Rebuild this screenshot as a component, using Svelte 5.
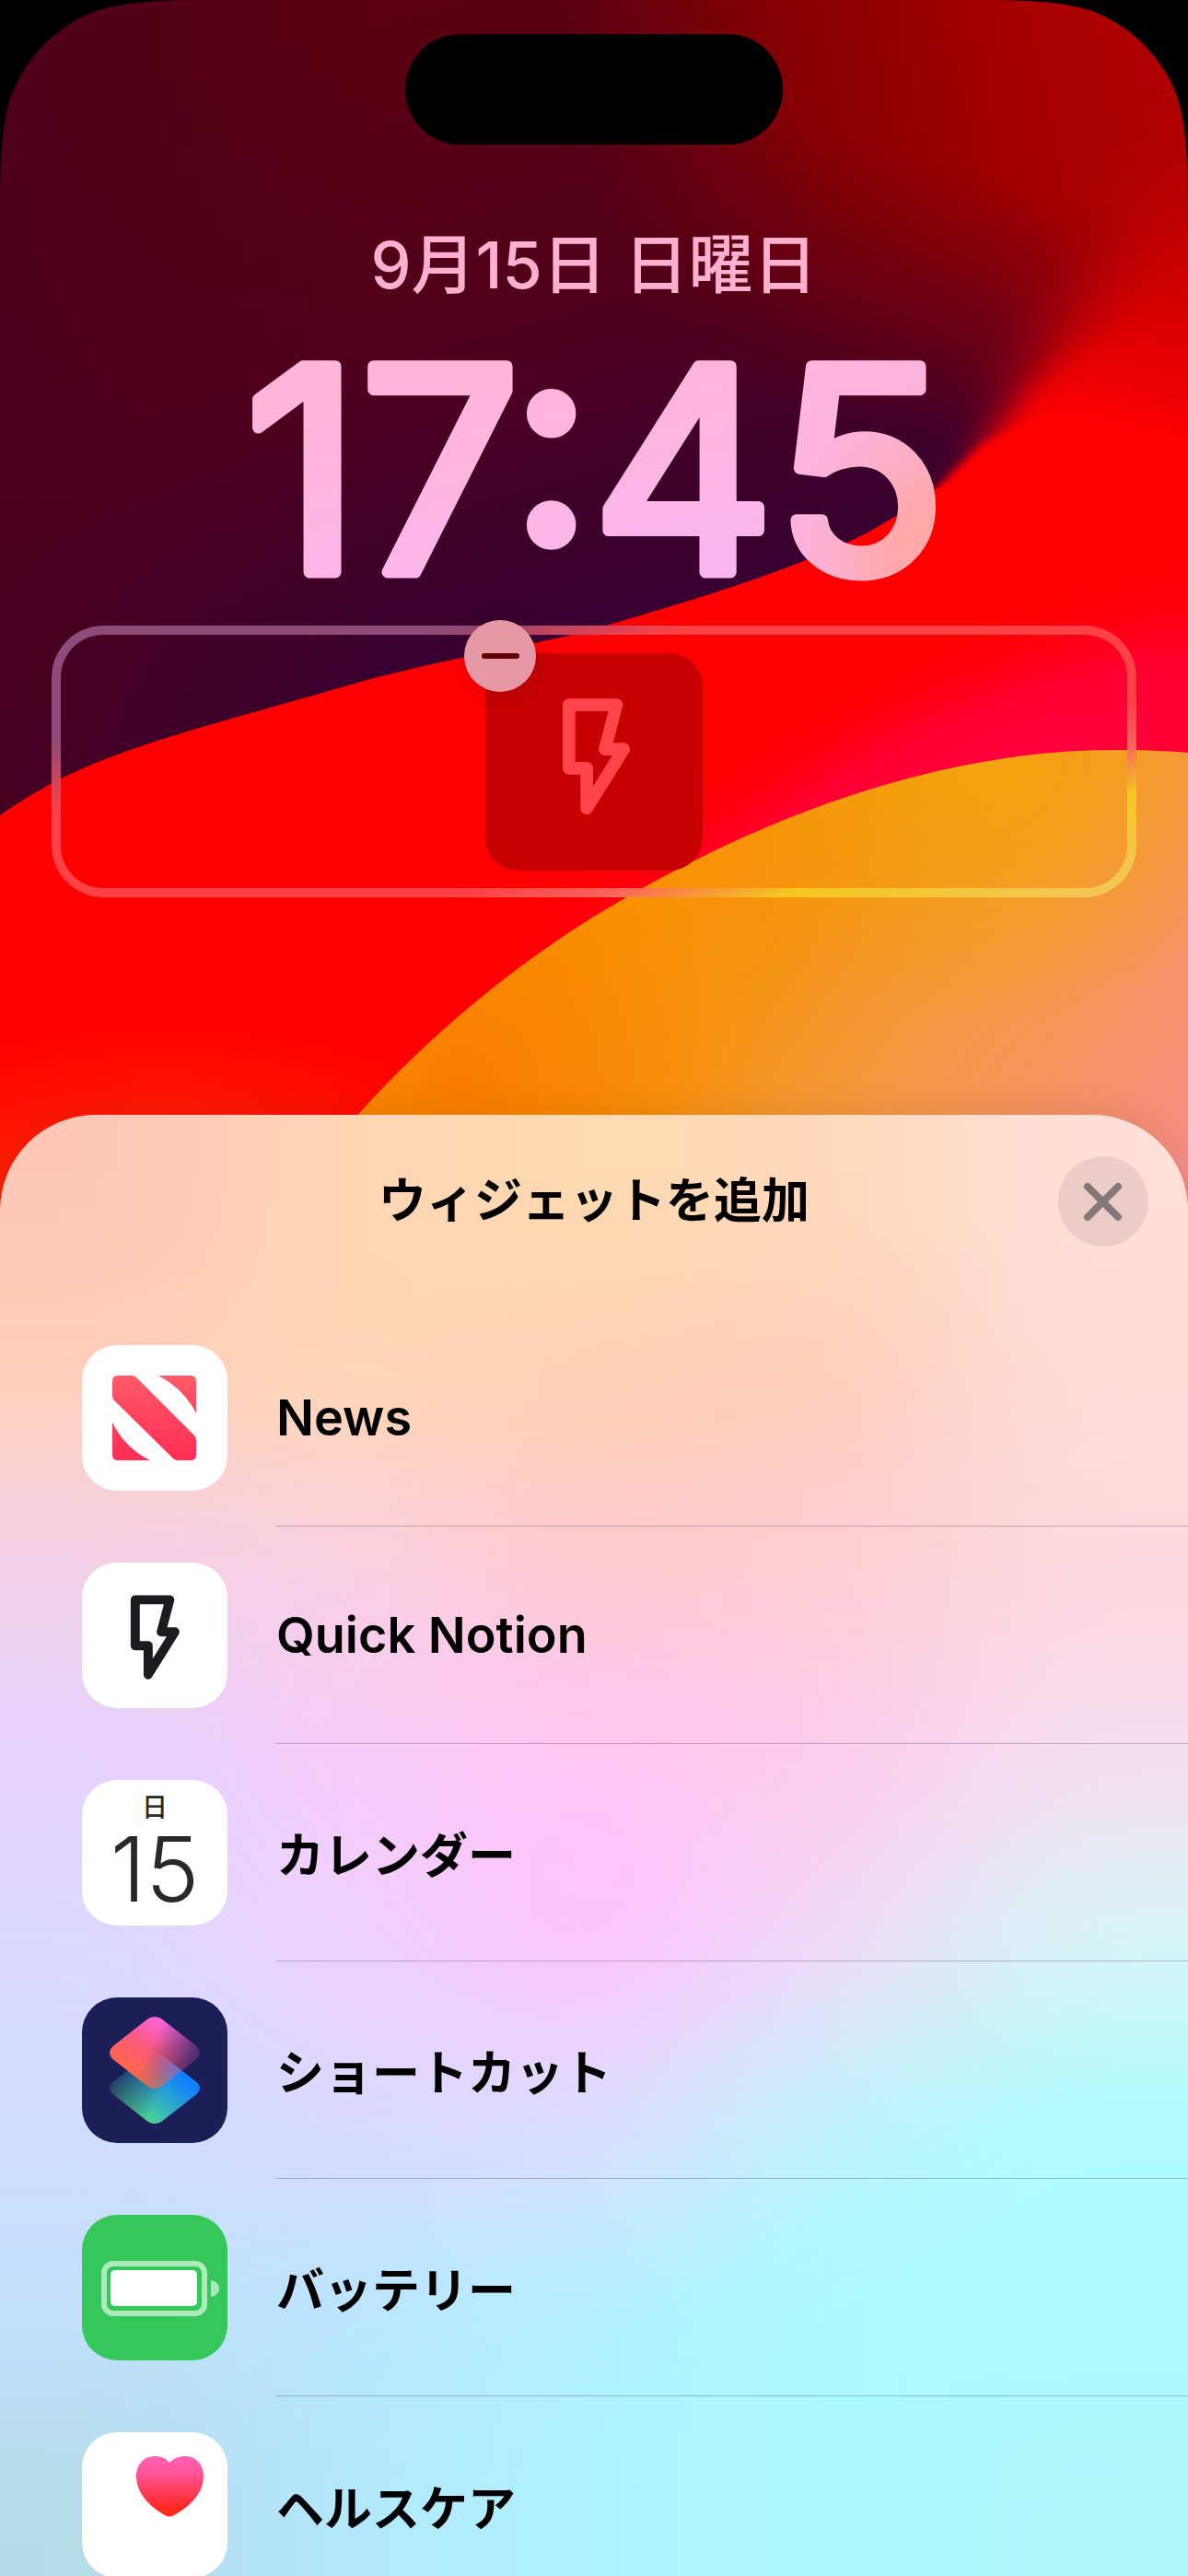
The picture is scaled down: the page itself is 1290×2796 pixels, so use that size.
<script lang="ts">
	type App = { id: string; name: string; lang?: string };

	const apps: App[] = [
		{ id: "news", name: "News", lang: "en" },
		{ id: "notion", name: "Quick Notion", lang: "en" },
		{ id: "calendar", name: "カレンダー" },
		{ id: "shortcuts", name: "ショートカット" },
		{ id: "battery", name: "バッテリー" },
		{ id: "health", name: "ヘルスケア" },
	];

	// colour cells of the sheet background, blurred into each other
	const tints = [
		["#ffc6b8", "#ffd6b4", "#ffdab0", "#ffd8ba", "#ffdfd6"],
		["#fed0ba", "#ffd6b4", "#fecfb4", "#fdccba", "#fedcd6"],
		["#f2d0e8", "#f9cfe4", "#fec9d0", "#fdced4", "#fdd8e0"],
		["#e4d2fe", "#f8caf8", "#fec6f4", "#fdcaea", "#f6deee"],
		["#dcd8fe", "#eed0fe", "#ffc0fe", "#f0d8f8", "#d8f5f6"],
		["#d0dcfe", "#dad8fe", "#dedcfd", "#bdf3fa", "#aefcff"],
		["#c4e0fe", "#b9e5fe", "#b2f0ff", "#a9faff", "#aafbff"],
		["#b4dce8", "#b3e8fe", "#aef2ff", "#aaf9ff", "#acf7f9"],
	];
	const cols = tints[0].length;
	const rows = tints.length;

	let hasWidget = $state(true);
	let open = $state(true);
</script>

{#snippet bolt()}
	<path
		d="M353 345H508L470 489H531L411 681V551H353Z"
		fill="none"
		stroke="currentColor"
		stroke-width="41"
		stroke-linejoin="round"
	/>
{/snippet}

<main class="screen">
	<svg class="wallpaper" viewBox="0 0 1290 2796" preserveAspectRatio="xMidYMin slice" aria-hidden="true">
		<defs>
			<linearGradient id="dusk" gradientUnits="userSpaceOnUse" x1="420" y1="0" x2="620" y2="700">
				<stop offset="0" stop-color="#5c0012" />
				<stop offset="0.5" stop-color="#52001c" />
				<stop offset="0.85" stop-color="#3c002c" />
				<stop offset="1" stop-color="#380032" />
			</linearGradient>
			<linearGradient id="duskLeft" gradientUnits="userSpaceOnUse" x1="0" y1="0" x2="420" y2="0">
				<stop offset="0" stop-color="#4a001c" stop-opacity="0.8" />
				<stop offset="1" stop-color="#4a001c" stop-opacity="0" />
			</linearGradient>
			<linearGradient id="ember" gradientUnits="userSpaceOnUse" x1="640" y1="180" x2="1290" y2="60">
				<stop offset="0" stop-color="#8b0000" stop-opacity="0" />
				<stop offset="0.36" stop-color="#8b0000" stop-opacity="0.9" />
				<stop offset="0.75" stop-color="#a80000" />
				<stop offset="1" stop-color="#b00000" />
			</linearGradient>
			<linearGradient id="emberFade" gradientUnits="userSpaceOnUse" x1="1020" y1="0" x2="900" y2="460">
				<stop offset="0" stop-color="#fff" />
				<stop offset="0.35" stop-color="#fff" />
				<stop offset="1" stop-color="#fff" stop-opacity="0" />
			</linearGradient>
			<mask id="emberMask" maskUnits="userSpaceOnUse" x="0" y="0" width="1290" height="900">
				<rect width="1290" height="900" fill="url(#emberFade)" />
			</mask>
			<linearGradient id="flare" gradientUnits="userSpaceOnUse" x1="1270" y1="150" x2="1200" y2="470">
				<stop offset="0" stop-color="#b40000" />
				<stop offset="0.55" stop-color="#d60000" />
				<stop offset="0.85" stop-color="#f00000" />
				<stop offset="1" stop-color="#ff0000" />
			</linearGradient>
			<radialGradient id="rose" gradientUnits="userSpaceOnUse" cx="0" cy="0" r="1" gradientTransform="translate(1020 910) rotate(-28) scale(640 210)">
				<stop offset="0" stop-color="#ff0048" />
				<stop offset="0.5" stop-color="#ff0038" stop-opacity="0.9" />
				<stop offset="1" stop-color="#ff0000" stop-opacity="0" />
			</radialGradient>
			<radialGradient id="warm" gradientUnits="userSpaceOnUse" cx="0" cy="0" r="1" gradientTransform="translate(180 1300) scale(420 200)">
				<stop offset="0" stop-color="#ff4000" />
				<stop offset="1" stop-color="#ff2000" stop-opacity="0" />
			</radialGradient>
			<linearGradient id="sun" gradientUnits="userSpaceOnUse" x1="700" y1="940" x2="1240" y2="1330">
				<stop offset="0" stop-color="#f89200" />
				<stop offset="0.25" stop-color="#f69412" />
				<stop offset="0.55" stop-color="#f59846" />
				<stop offset="1" stop-color="#f68e84" />
			</linearGradient>
			<radialGradient id="gold" gradientUnits="userSpaceOnUse" cx="1080" cy="820" r="300">
				<stop offset="0" stop-color="#f3a608" stop-opacity="0.9" />
				<stop offset="1" stop-color="#f3a000" stop-opacity="0" />
			</radialGradient>
			<radialGradient id="amber" gradientUnits="userSpaceOnUse" cx="500" cy="1180" r="330">
				<stop offset="0" stop-color="#fa7c00" />
				<stop offset="1" stop-color="#f98600" stop-opacity="0" />
			</radialGradient>
			<filter id="blurS" x="-20%" y="-20%" width="140%" height="140%">
				<feGaussianBlur stdDeviation="4" />
			</filter>
			<filter id="blurM" x="-20%" y="-20%" width="140%" height="140%">
				<feGaussianBlur stdDeviation="16" />
			</filter>
			<filter id="blurL" x="-40%" y="-40%" width="180%" height="180%">
				<feGaussianBlur stdDeviation="42" />
			</filter>
			<clipPath id="upper">
				<path d="M0 885C90 822 160 806 378 744C480 714 580 702 658 679C740 655 860 620 940 579C975 560 1000 544 1020 528L1290 700V0H0Z" />
			</clipPath>
			<path id="disc" d="M389 1210C480 1108 590 1025 675 977C810 898 1010 812 1218 814Q1256 814 1290 817V1700H100Z" />
		</defs>

		<rect width="1290" height="2796" fill="#f00" />
		<g clip-path="url(#upper)">
			<rect width="1290" height="900" fill="url(#dusk)" />
			<rect width="1290" height="900" fill="url(#duskLeft)" />
			<rect width="1290" height="900" fill="url(#ember)" mask="url(#emberMask)" />
			<g fill="url(#flare)">
				<path d="M1600 120L1290 190L1210 280L1160 350L1120 430L1100 560L1600 600Z" filter="url(#blurL)" />
				<path d="M1600 350L1290 360L1180 380L1125 420L1075 478L1030 540L1600 720Z" filter="url(#blurM)" />
				<path d="M1600 470L1200 450L1120 455L1066 483L1018 529L980 560L1000 800H1600Z" filter="url(#blurS)" />
			</g>
		</g>
		<!-- closes the seam of the clipped area -->
		<path d="M1024 526L1100 510L1290 620V760L1000 700Z" fill="#f00" />
		<rect y="480" width="1290" height="900" fill="url(#rose)" />
		<rect y="1090" width="640" height="400" fill="url(#warm)" />
		<use href="#disc" fill="url(#sun)" />
		<use href="#disc" fill="url(#gold)" />
		<use href="#disc" fill="url(#amber)" />
		<path d="M0 0H252C180 0 143 0 104 12C62 28 28 62 12 104C0 143 0 180 0 252Z" />
		<path d="M1290 0H1038C1110 0 1147 0 1186 12C1228 28 1262 62 1278 104C1290 143 1290 180 1290 252Z" />
	</svg>

	<div class="island"></div>

	<header class="lock">
		<p class="date">9月15日 日曜日</p>
		<svg class="clock" viewBox="0 0 800 232">
			<defs>
				<linearGradient id="digits" gradientUnits="userSpaceOnUse" x1="300" y1="0" x2="345" y2="232">
					<stop offset="0" stop-color="#ffb5d8" />
					<stop offset="1" stop-color="#fab5ec" />
				</linearGradient>
				<radialGradient id="glow" gradientUnits="userSpaceOnUse" cx="790" cy="210" r="230">
					<stop offset="0" stop-color="#ffa8a4" />
					<stop offset="0.3" stop-color="#ffa8aa" />
					<stop offset="1" stop-color="#ffb2cc" stop-opacity="0" />
				</radialGradient>
				<pattern id="ink" patternUnits="userSpaceOnUse" x="0" y="-20" width="800" height="300">
					<g transform="translate(0 20)">
						<rect y="-20" width="800" height="300" fill="url(#digits)" />
						<rect y="-20" width="800" height="300" fill="url(#glow)" />
					</g>
				</pattern>
			</defs>
			<text x="402" y="227">17:45</text>
		</svg>
	</header>

	<section class="slot" aria-label="ウィジェット">
		{#if hasWidget}
			<div class="widget">
				<svg viewBox="81 177 707 707" aria-hidden="true">{@render bolt()}</svg>
				<button class="remove" aria-label="削除" onclick={() => (hasWidget = false)}></button>
			</div>
		{/if}
	</section>

	{#if open}
		<section class="sheet" aria-labelledby="sheet-title">
			<svg class="tint" viewBox="0 0 {cols * 100} {rows * 100}" preserveAspectRatio="none" aria-hidden="true">
				<defs>
					<filter id="melt" filterUnits="userSpaceOnUse" x="-100" y="-100" width={cols * 100 + 200} height={rows * 100 + 200}>
						<feGaussianBlur stdDeviation="38" />
					</filter>
				</defs>
				<g filter="url(#melt)">
					{#each tints as line, r}
						{#each line as color, c}
							<rect
								x={c === 0 ? -200 : c * 100}
								y={r === 0 ? -200 : r * 100}
								width={c === 0 || c === cols - 1 ? 301 : 101}
								height={r === 0 || r === rows - 1 ? 301 : 101}
								fill={color}
							/>
						{/each}
					{/each}
				</g>
			</svg>

			<header class="bar">
				<h1 id="sheet-title">ウィジェットを追加</h1>
				<button class="close" aria-label="閉じる" onclick={() => (open = false)}>
					<svg viewBox="0 0 98 98" aria-hidden="true">
						<path d="M32 33L65 66M65 33L32 66" />
					</svg>
				</button>
			</header>

			<ul class="apps">
				{#each apps as app (app.id)}
					<li>
						<button class="row">
							<span class="icon {app.id}" aria-hidden="true">
								{#if app.id === "news"}
									<svg viewBox="0 0 158 158">
										<defs>
											<linearGradient id="news-red" gradientUnits="userSpaceOnUse" x1="79" y1="33" x2="79" y2="125">
												<stop offset="0" stop-color="#ff5a68" />
												<stop offset="1" stop-color="#ff2d55" />
											</linearGradient>
										</defs>
										<g fill="url(#news-red)">
											<path d="M39 33H54Q57 33 59 35L122 98Q124 100 124 103V119Q124 125 118 125H104Q101 125 99 123L35 60Q33 58 33 55V39Q33 33 39 33Z" />
											<path d="M83 33H118Q124 33 124 39V74Q111 48 83 33Z" />
											<path d="M33 84Q47 112 74 125H39Q33 125 33 119Z" />
										</g>
									</svg>
								{:else if app.id === "notion"}
									<svg viewBox="114 178 653 653">{@render bolt()}</svg>
								{:else if app.id === "calendar"}
									<span class="weekday">日</span>
									<span class="day">15</span>
								{:else if app.id === "shortcuts"}
									<svg viewBox="0 0 158 158">
										<defs>
											<linearGradient id="sc-pink" gradientUnits="userSpaceOnUse" x1="48" y1="84" x2="84" y2="22">
												<stop offset="0" stop-color="#ff6a42" />
												<stop offset="0.5" stop-color="#fb5a78" />
												<stop offset="1" stop-color="#f864dc" />
											</linearGradient>
											<linearGradient id="sc-blue" gradientUnits="userSpaceOnUse" x1="66" y1="132" x2="106" y2="86">
												<stop offset="0" stop-color="#4cd890" />
												<stop offset="1" stop-color="#1080ff" />
											</linearGradient>
											<linearGradient id="sc-fade-r" gradientUnits="userSpaceOnUse" x1="76" y1="50" x2="122" y2="72">
												<stop offset="0" stop-color="#fff" />
												<stop offset="1" stop-color="#fff" stop-opacity="0.2" />
											</linearGradient>
											<linearGradient id="sc-fade-l" gradientUnits="userSpaceOnUse" x1="84" y1="110" x2="38" y2="84">
												<stop offset="0" stop-color="#fff" />
												<stop offset="1" stop-color="#fff" stop-opacity="0.2" />
											</linearGradient>
											<mask id="sc-mask-r"><rect width="158" height="158" fill="url(#sc-fade-r)" /></mask>
											<mask id="sc-mask-l"><rect width="158" height="158" fill="url(#sc-fade-l)" /></mask>
										</defs>
										<path
											d="M68 65Q79 55 90 65L122 90Q134 98 122 107L90 132Q79 142 68 132L36 107Q24 98 36 90Z"
											fill="url(#sc-blue)"
											mask="url(#sc-mask-l)"
										/>
										<path
											d="M68 26Q79 16 90 26L122 51Q134 60 122 69L90 94Q79 104 68 94L36 69Q24 60 36 51Z"
											fill="url(#sc-pink)"
											mask="url(#sc-mask-r)"
										/>
									</svg>
								{:else if app.id === "battery"}
									<svg viewBox="0 0 158 158" fill="#fff">
										<rect x="24" y="53" width="109" height="54" rx="10" fill="none" stroke="#fff" stroke-opacity="0.6" stroke-width="6" />
										<rect x="31" y="60" width="94" height="39" rx="5" />
										<path d="M140 71Q149 73 149 80T140 89Z" fill-opacity="0.6" />
									</svg>
								{:else}
									<svg viewBox="0 0 158 158">
										<defs>
											<linearGradient id="heart-red" x1="0" y1="0" x2="0" y2="1">
												<stop offset="0" stop-color="#ff62b8" />
												<stop offset="0.3" stop-color="#ff5496" />
												<stop offset="0.85" stop-color="#ff2822" />
												<stop offset="1" stop-color="#ff2a18" />
											</linearGradient>
										</defs>
										<path
											d="M95 33C91 28 86 26 79 26C67 26 59 35 59 48C59 66 74 81 90 90Q95 93 100 90C117 81 132 66 132 48C132 35 124 26 112 26C105 26 100 28 95 33Z"
											fill="url(#heart-red)"
										/>
									</svg>
								{/if}
							</span>
							<span class="name" lang={app.lang}>{app.name}</span>
						</button>
					</li>
				{/each}
			</ul>
		</section>
	{/if}
</main>

<style>
	:global(body) {
		margin: 0;
		background: #000;
	}

	.screen {
		position: relative;
		display: flex;
		flex-direction: column;
		height: 100vh;
		overflow: hidden;
		font-family: Inter, "Noto Sans CJK JP", sans-serif;
		color: #000;
	}

	button {
		border: 0;
		padding: 0;
		font: inherit;
		color: inherit;
		background: none;
		cursor: pointer;
	}

	.wallpaper {
		position: absolute;
		inset: 0;
		width: 100%;
		height: 100%;
	}

	.island {
		position: relative;
		flex: none;
		align-self: center;
		width: 410px;
		height: 120px;
		margin-top: 37px;
		border-radius: 60px;
		background: #000;
	}

	.lock {
		position: relative;
		display: flex;
		flex-direction: column;
		align-items: center;
		gap: 66px;
		margin-top: 91px;
	}

	.date {
		margin: 0;
		font-size: 70px;
		font-weight: 500;
		line-height: 80px;
		color: #ffb0cf;
	}

	.clock {
		width: 800px;
		height: 232px;
		overflow: visible;
	}

	.clock text {
		font-size: 307px;
		font-weight: 400;
		text-anchor: middle;
		fill: url(#ink);
		stroke: url(#ink);
		stroke-width: 13px;
		stroke-linejoin: round;
	}

	.slot {
		position: relative;
		display: flex;
		flex: none;
		align-items: center;
		justify-content: center;
		box-sizing: border-box;
		height: 295px;
		margin: 53px 56px 0;
	}

	/* gradient ring only, the middle is masked out */
	.slot::before {
		content: "";
		position: absolute;
		inset: 0;
		border: 10px solid transparent;
		border-radius: 56px;
		background: linear-gradient(
				164deg,
				#8e4a78 20%,
				#ff4045 32%,
				#ff4045 66%,
				#f9605c 73%,
				#f3c820 82%,
				#f3c660 100%
			)
			border-box;
		mask: linear-gradient(#000 0 0) padding-box exclude, linear-gradient(#000 0 0) border-box;
	}

	.widget {
		position: relative;
		width: 236px;
		height: 236px;
		border-radius: 36px;
		background: #c70004;
		color: #ff4549;
	}

	.widget svg {
		display: block;
		width: 100%;
	}

	.remove {
		position: absolute;
		top: -36px;
		left: -23px;
		display: grid;
		place-items: center;
		width: 78px;
		height: 78px;
		border-radius: 50%;
		background: #e599a4;
		box-shadow: 0 6px 30px rgba(0, 0, 0, 0.12);
	}

	.remove::before {
		content: "";
		width: 41px;
		height: 6px;
		border-radius: 3px;
		background: #5c0000;
	}

	.sheet {
		position: relative;
		display: flex;
		flex: 1;
		flex-direction: column;
		min-height: 0;
		margin-top: 236px;
		border-radius: 104px 104px 0 0;
		overflow: hidden;
		box-shadow: 0 0 40px rgba(0, 0, 0, 0.1);
	}

	.tint {
		position: absolute;
		inset: 0;
		width: 100%;
		height: 100%;
	}

	.bar {
		position: relative;
		display: grid;
		flex: none;
		grid-template-columns: 1fr auto 1fr;
		align-items: center;
		padding: 45px 43px 68px;
	}

	.bar h1 {
		grid-column: 2;
		margin: 0;
		font-size: 52px;
		font-weight: 700;
		line-height: 98px;
	}

	.close {
		justify-self: end;
		width: 98px;
		height: 98px;
		border-radius: 50%;
		background: rgba(120, 100, 110, 0.14);
	}

	.close svg {
		display: block;
		fill: none;
		stroke: #857878;
		stroke-width: 8px;
		stroke-linecap: round;
	}

	.apps {
		position: relative;
		flex: 1;
		min-height: 0;
		margin: 0;
		padding: 0;
		list-style: none;
		overflow-y: auto;
		scrollbar-width: none;
	}

	.row {
		display: flex;
		align-items: center;
		gap: 53px;
		width: 100%;
		height: 236px;
		padding-left: 89px;
		text-align: left;
	}

	.icon {
		display: flex;
		flex: none;
		flex-direction: column;
		align-items: center;
		width: 158px;
		height: 158px;
		border-radius: 38px;
		background: #fff;
		overflow: hidden;
	}

	.icon svg {
		width: 100%;
	}

	.notion {
		color: #1d1b20;
	}

	.shortcuts {
		background: #1c1e58;
	}

	.battery {
		background: #35c759;
	}

	.calendar {
		color: #282828;
	}

	.weekday {
		margin-top: 12px;
		font-size: 28px;
		font-weight: 500;
		line-height: 36px;
	}

	.day {
		font-size: 98px;
		font-weight: 300;
		line-height: 98px;
	}

	.name {
		display: flex;
		flex: 1;
		align-items: center;
		align-self: stretch;
		box-sizing: border-box;
		border-bottom: 1px solid rgba(60, 50, 80, 0.3);
		font-size: 52px;
		font-weight: 600;
	}

	.name:lang(en) {
		font-size: 54px;
	}

	li:last-child .name {
		border-bottom: 0;
	}
</style>
